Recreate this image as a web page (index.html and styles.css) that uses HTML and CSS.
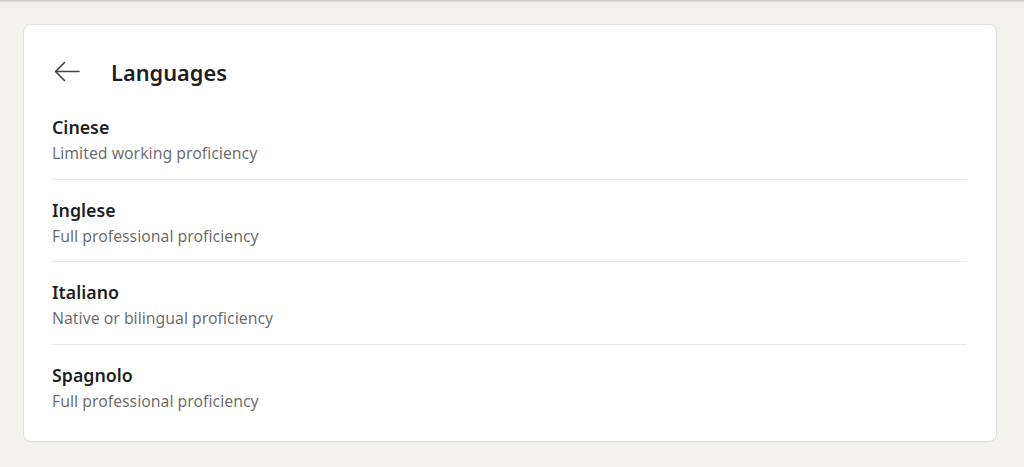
FILE: index.html
```html
<!DOCTYPE html>
<html lang="en">
<head>
    <meta charset="UTF-8">
    <meta name="viewport" content="width=device-width, initial-scale=1.0">
    <title>Languages</title>
    <link rel="stylesheet" href="styles.css">
</head>
<body>

    <div class="top-shadow"></div>

    <main class="page">
        <section class="card">
            <header class="card-header">
                <button class="back-btn" aria-label="Back">
                    <svg width="28" height="24" viewBox="0 0 28 24" fill="none" stroke="#404040" stroke-width="1.6" stroke-linecap="round" stroke-linejoin="round">
                        <path d="M26 11.5H3"/>
                        <path d="M11.5 2.5L2.5 11.5L11.5 20.5"/>
                    </svg>
                </button>
                <h1>Languages</h1>
            </header>

            <ul class="lang-list">
                <li class="lang-item">
                    <div class="lang-name">Cinese</div>
                    <div class="lang-level">Limited working proficiency</div>
                </li>
                <li class="lang-item">
                    <div class="lang-name">Inglese</div>
                    <div class="lang-level">Full professional proficiency</div>
                </li>
                <li class="lang-item">
                    <div class="lang-name">Italiano</div>
                    <div class="lang-level">Native or bilingual proficiency</div>
                </li>
                <li class="lang-item">
                    <div class="lang-name">Spagnolo</div>
                    <div class="lang-level">Full professional proficiency</div>
                </li>
            </ul>
        </section>
    </main>

</body>
</html>
```

FILE: styles.css
```css
body {
    margin: 0;
    background: #f4f2ee;
    font-family: "Noto Sans", "Open Sans", sans-serif;
    color: rgba(0, 0, 0, 0.9);
}

.top-shadow {
    height: 3px;
    background: linear-gradient(#c9c8c5, #f4f2ee);
}

.page {
    padding: 21px 27px 26px 23px;
}

.card {
    background: #fff;
    border: 1px solid #e0dfdc;
    border-radius: 8px;
    padding: 22px 29px 15px 28px;
}

.card-header {
    display: flex;
    align-items: center;
    height: 50px;
}

.back-btn {
    display: flex;
    align-items: center;
    justify-content: center;
    background: none;
    border: none;
    padding: 0;
    margin: 0 30px 0 1px;
    width: 28px;
    height: 28px;
    cursor: pointer;
}

.card-header h1 {
    margin: 0;
    font-size: 21.8px;
    font-weight: 600;
    color: rgba(0, 0, 0, 0.9);
}

.lang-list {
    list-style: none;
    margin: 0;
    padding: 0;
}

.lang-item {
    padding: 17px 0 12.5px;
    border-bottom: 1px solid #e8e8e8;
}

.lang-item:last-child {
    border-bottom: none;
}

.lang-name {
    font-size: 17.8px;
    font-weight: 600;
    line-height: 26px;
}

.lang-level {
    font-size: 15.8px;
    line-height: 26px;
    color: rgba(0, 0, 0, 0.6);
}
```
